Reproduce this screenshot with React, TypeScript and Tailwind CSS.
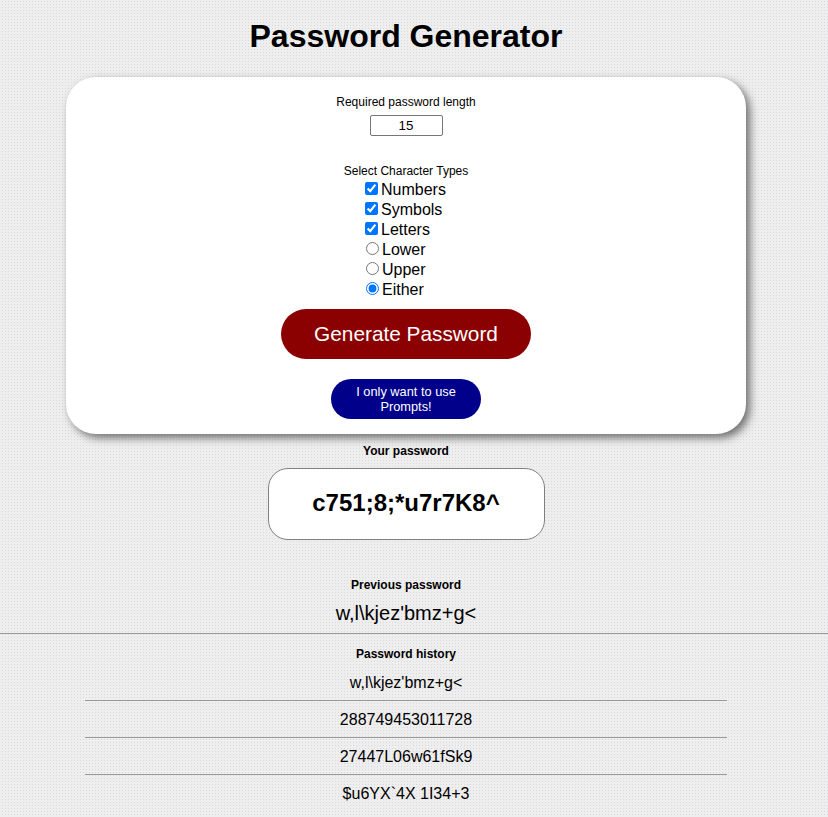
import React from "react";

const types = ["Numbers", "Symbols", "Letters"];
const cases = ["Lower", "Upper", "Either"];
const history = ["w,l\\kjez'bmz+g<", "288749453011728", "27447L06w61fSk9", "$u6YX`4X 1I34+3"];

export default function App() {
  return (
    <div className="h-[817px] overflow-hidden bg-[#eeeeee] bg-[linear-gradient(to_right,#eeeeee_2px,transparent_2px),linear-gradient(to_bottom,#eeeeee_1px,#d9d9dd_1px,#d9d9dd_2px,#eeeeee_2px)] bg-[length:3px_3px] font-['Liberation_Sans',Arial,sans-serif] text-black">
      <div className="flex w-[812px] flex-col items-center">
        <h1 className="mt-[18px] text-[32px] leading-[37px] font-bold">Password Generator</h1>
        <main className="mt-[22px] flex h-[357px] w-[680px] flex-col items-center rounded-[30px] bg-white shadow-[4px_4px_9px_#707070]">
          <label className="mt-[18px] text-[12px] leading-[14px]">Required password length</label>
          <input
            className="mt-[6px] h-[21px] w-[73px] rounded-[2px] border border-[#767676] bg-white text-center text-[13.333px]"
            defaultValue="15"
          />
          <p className="mt-[28px] text-[12px] leading-[14px]">Select Character Types</p>
          <div className="mt-[2px] w-[82px] text-[16px]">
            {types.map((t) => (
              <label key={t} className="flex h-5 items-center leading-5">
                <input type="checkbox" defaultChecked className="mr-[3px] -mt-[4px] h-[13px] w-[13px] shrink-0" />
                {t}
              </label>
            ))}
            {cases.map((t) => (
              <label key={t} className="flex h-5 items-center pl-px leading-5">
                <input type="radio" name="case" defaultChecked={t === "Either"} className="mr-[3px] -mt-[4px] h-[13px] w-[13px] shrink-0" />
                {t}
              </label>
            ))}
          </div>
          <button className="mt-[9px] h-[50px] w-[250px] rounded-[30px] bg-[#8b0000] text-[20.8px] text-white">Generate Password</button>
          <button className="mt-5 h-10 w-[150px] rounded-[30px] bg-[#00008b] px-5 text-[12.8px] leading-[15px] text-white">
            I only want to use Prompts!
          </button>
        </main>
        <h2 className="mt-[10px] text-[12px] leading-[14px] font-bold">Your password</h2>
        <div className="mt-[10px] flex h-[72px] w-[277px] items-center justify-center rounded-[20px] border border-[#808080] bg-white text-[24px] font-bold">
          <span className="-mt-[2px]">c751;8;*u7r7K8^</span>
        </div>
        <h2 className="mt-[38px] text-[12px] leading-[14px] font-bold">Previous password</h2>
        <p className="mt-[9px] text-[20px] leading-[24px]">{history[0]}</p>
      </div>
      <hr className="mt-[8px] h-px border-0 bg-[#9a9a9a]" />
      <div className="flex w-[812px] flex-col items-center">
        <h2 className="mt-[13px] text-[12px] leading-[14px] font-bold">Password history</h2>
        <ul className="mt-[3px] w-[642px] text-center text-[16px]">
          {history.map((p) => (
            <li key={p} className="h-[37px] border-b border-[#9a9a9a] pt-[10px] leading-[18px] last:border-b-0">{p}</li>
          ))}
        </ul>
      </div>
    </div>
  );
}
